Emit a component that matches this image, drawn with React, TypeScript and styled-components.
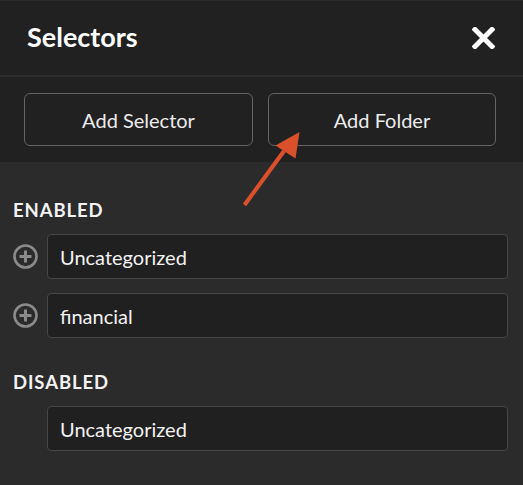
import React from "react";
import styled, { createGlobalStyle } from "styled-components";

const Global = createGlobalStyle`
  html, body { margin: 0; padding: 0; background: #2b2b2b; }
  body { font-family: Lato, "Noto Sans", sans-serif; }
  * { box-sizing: border-box; }
`;

const Panel = styled.div`
  position: relative;
  width: 523px;
  height: 485px;
  overflow: hidden;
  background: #2b2b2b;
  display: flex;
  flex-direction: column;
  border-top: 1px solid #2c2c2c;
`;

const Header = styled.div`
  height: 76px;
  flex: none;
  background: #212121;
  border-bottom: 2px solid #2d2d2d;
  display: flex;
  align-items: center;
  justify-content: space-between;
  padding: 0 28px 0 27px;
`;

const Title = styled.h1`
  margin: 0;
  font-size: 27px;
  font-weight: 700;
  color: #ffffff;
  line-height: 30px;
  padding-bottom: 3px;
`;

const CloseButton = styled.button`
  background: none;
  border: none;
  padding: 0;
  width: 23px;
  height: 22px;
  display: flex;
  cursor: pointer;
  margin-bottom: 1px;
`;

const Toolbar = styled.div`
  background: #212121;
  flex: none;
  display: grid;
  grid-template-columns: 229px 228px;
  column-gap: 15px;
  padding: 16px 27px 16px 24px;
`;

const ToolButton = styled.button`
  height: 53px;
  background: #212121;
  border: 1px solid #646464;
  border-radius: 6px;
  color: #ececec;
  font-family: Lato, "Noto Sans", sans-serif;
  font-size: 20px;
  cursor: pointer;
`;

const Content = styled.div`
  flex: 1;
  padding: 38px 15px 0 13px;
  display: flex;
  flex-direction: column;
`;

const SectionLabel = styled.div<{ $top?: number }>`
  font-size: 18.5px;
  font-weight: 700;
  letter-spacing: 0.9px;
  color: #f2f2f2;
  line-height: 20px;
  margin-top: ${(p) => p.$top ?? 0}px;
  margin-bottom: 14px;
`;

const List = styled.div`
  display: flex;
  flex-direction: column;
  gap: 14px;
`;

const Row = styled.div`
  display: flex;
  align-items: center;
  gap: 9px;
`;

const IconSlot = styled.div`
  width: 25px;
  height: 25px;
  flex: none;
  display: flex;
  align-items: center;
  justify-content: center;
`;

const Field = styled.div`
  flex: 1;
  height: 45px;
  background: #202020;
  border: 1px solid #474747;
  border-radius: 4px;
  display: flex;
  align-items: center;
  padding: 0 12px;
  color: #f2f2f2;
  font-size: 20px;
`;

const ArrowOverlay = styled.svg`
  position: absolute;
  left: 0;
  top: 0;
  pointer-events: none;
`;

const PlusCircle = () => (
  <svg width="25" height="25" viewBox="0 0 25 25">
    <circle cx="12.5" cy="12.5" r="11" fill="none" stroke="#8a8a8a" strokeWidth="2.6" />
    <path d="M12.5 6.5v12M6.5 12.5h12" stroke="#8a8a8a" strokeWidth="3" />
  </svg>
);

const CloseIcon = () => (
  <svg width="23" height="22" viewBox="0 0 23 22">
    <path d="M3 2.5L20 19.5M20 2.5L3 19.5" stroke="#ffffff" strokeWidth="5" strokeLinecap="square" />
  </svg>
);

type Item = { name: string; icon: boolean };

const enabled: Item[] = [
  { name: "Uncategorized", icon: true },
  { name: "financial", icon: true },
];
const disabled: Item[] = [{ name: "Uncategorized", icon: false }];

const ItemRow = ({ item }: { item: Item }) => (
  <Row>
    <IconSlot>{item.icon && <PlusCircle />}</IconSlot>
    <Field>{item.name}</Field>
  </Row>
);

export default function App() {
  return (
    <>
      <Global />
      <Panel>
        <Header>
          <Title>Selectors</Title>
          <CloseButton aria-label="Close">
            <CloseIcon />
          </CloseButton>
        </Header>
        <Toolbar>
          <ToolButton>Add Selector</ToolButton>
          <ToolButton>Add Folder</ToolButton>
        </Toolbar>
        <Content>
          <SectionLabel>ENABLED</SectionLabel>
          <List>
            {enabled.map((it, i) => (
              <ItemRow key={i} item={it} />
            ))}
          </List>
          <SectionLabel $top={34}>DISABLED</SectionLabel>
          <List>
            {disabled.map((it, i) => (
              <ItemRow key={i} item={it} />
            ))}
          </List>
        </Content>
        <ArrowOverlay width="523" height="485" viewBox="0 0 523 485">
          <path d="M244.5 204L284 150" stroke="#d9502b" strokeWidth="4.2" />
          <path d="M299.5 131L275.5 144.5L295.5 157.5Z" fill="#d9502b" />
        </ArrowOverlay>
      </Panel>
    </>
  );
}
